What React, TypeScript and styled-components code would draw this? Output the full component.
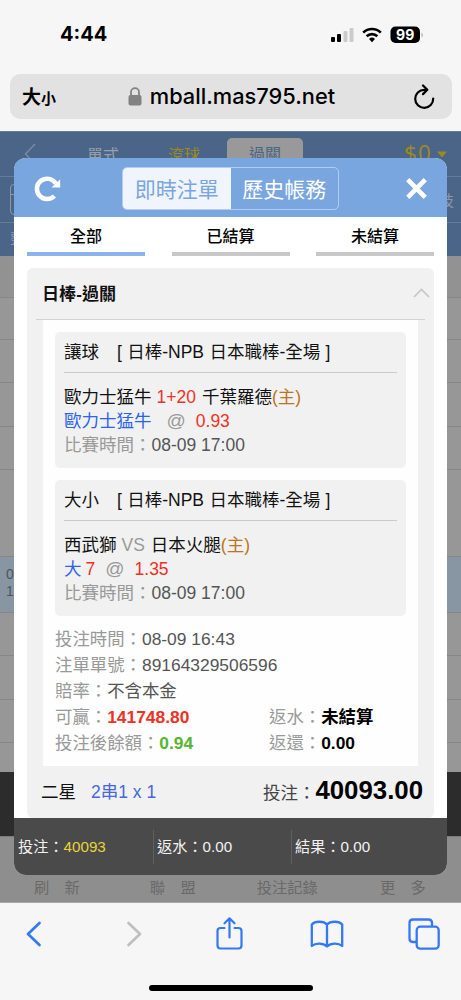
import React from "react";
import styled, { createGlobalStyle } from "styled-components";

const Global = createGlobalStyle`
  * { box-sizing: border-box; }
  body { margin: 0; background: #f6f6f6; }
`;

const Phone = styled.div`
  width: 461px;
  height: 1000px;
  display: flex;
  flex-direction: column;
  position: relative;
  overflow: hidden;
  background: #f6f6f6;
  white-space: nowrap;
  font-family: "Liberation Sans", "Noto Sans CJK TC", sans-serif;
`;

const StatusBar = styled.div`
  height: 74px;
  flex: none;
  display: flex;
  justify-content: space-between;
  padding: 20px 38px 0 60px;
`;
const Clock = styled.div`
  font: 700 20px/29px Inter, sans-serif;
  color: #000;
`;
const StatusIcons = styled.div`
  display: flex;
  height: 29px;
  align-items: center;
`;

const AddressBar = styled.div`
  flex: none;
  height: 45px;
  margin: 0 9px 12px 10px;
  padding: 0 17px 0 12px;
  border-radius: 10px;
  background: #e2e2e2;
  display: flex;
  align-items: center;
  justify-content: space-between;
  color: #000;
`;
const TextSize = styled.div`
  width: 60px;
  font: 700 19px/45px "Noto Sans CJK TC", sans-serif;
  & > small { font-size: 15px; }
`;
const Address = styled.div`
  display: flex;
  align-items: center;
  gap: 8px;
  margin-left: 6px;
  font: 500 21.8px/45px Inter, sans-serif;
`;
const ReloadSlot = styled.div`
  width: 60px;
  display: flex;
  justify-content: flex-end;
`;

const Site = styled.div`
  flex: none;
  height: 771px;
  background: #979797;
  display: flex;
  flex-direction: column;
`;
const SiteNav = styled.div`
  height: 46px;
  flex: none;
  background: #4a6588;
  border-top: 1px solid #6a7c90;
  border-bottom: 1px solid #647b99;
  display: flex;
  align-items: center;
  font-size: 16px;
  color: #8f9aa8;
  padding-left: 24px;
`;
const NavItem = styled.div<{ $left: number; $color?: string }>`
  margin-left: ${(p) => p.$left}px;
  color: ${(p) => p.$color || "#96a0ac"};
`;
const NavPill = styled.div`
  margin-left: 27px;
  width: 76px;
  height: 32px;
  line-height: 33px;
  border-radius: 5px;
  background: #999;
  color: #4a6588;
  text-align: center;
`;
const Balance = styled.div`
  display: flex;
  align-items: center;
  gap: 5px;
  margin-left: 101px;
  margin-top: -3px;
  font: 22.5px/40px "Noto Sans", sans-serif;
  letter-spacing: 1px;
  color: #9a8a20;
  & > svg { margin-top: 3px; }
`;
const SiteFilter = styled.div`
  height: 46px;
  flex: none;
  background: #4a6588;
  border-bottom: 1px solid #647b99;
  display: flex;
  align-items: center;
  justify-content: space-between;
  padding: 0 7px 0 10px;
  font-size: 15px;
  color: #8d98a6;
`;
const FilterBox = styled.div`
  width: 32px;
  height: 31px;
  border: 1px solid #8d98a6;
  border-radius: 4px;
  padding-top: 9px;
  &::before { content: ""; display: block; height: 1px; background: #8d98a6; }
`;
const SiteHeads = styled.div`
  height: 33px;
  flex: none;
  background: #4a6588;
  padding-left: 10px;
  font-size: 15px;
  line-height: 31px;
  color: #8d98a6;
`;
const SiteRow = styled.div<{ $h: number; $bg?: string; $line?: boolean }>`
  flex: none;
  height: ${(p) => p.$h}px;
  background: ${(p) => p.$bg || "#979797"};
  border-bottom: ${(p) => (p.$line === false ? "none" : "1px solid #868686")};
  padding: 9px 0 0 6px;
  font-size: 14px;
  line-height: 17px;
  color: #4f5459;
`;
const SiteTabs = styled.div`
  flex: none;
  height: 67px;
  background: #8e8e8e;
  border-top: 1px solid #7b7b7b;
  display: flex;
  align-items: flex-end;
  font-size: 15.3px;
  line-height: 28px;
  color: #696969;
  border-bottom: 1px solid #a8a8a8;
`;
const SiteTab = styled.div<{ $left: number }>`
  margin-left: ${(p) => p.$left}px;
  word-spacing: 11px;
`;

const Modal = styled.div`
  position: absolute;
  left: 14px;
  top: 158px;
  width: 433px;
  height: 717px;
  border-radius: 12px;
  overflow: hidden;
  background: #fff;
  display: flex;
  flex-direction: column;
`;
const ModalHead = styled.div`
  flex: none;
  height: 59px;
  background: #7aa6df;
  display: flex;
  align-items: center;
  padding: 2px 20px 0 20px;
`;
const Segments = styled.div`
  width: 217px;
  height: 43px;
  margin: 0 auto 0 60px;
  border: 1px solid #b3cdf0;
  border-radius: 5px;
  overflow: hidden;
  display: flex;
`;
const Segment = styled.div<{ $on?: boolean }>`
  flex: 1;
  text-align: center;
  font-size: 21px;
  line-height: 43px;
  background: ${(p) => (p.$on ? "#f0f4fc" : "transparent")};
  color: ${(p) => (p.$on ? "#79a6e0" : "#fff")};
`;
const Tabs = styled.div`
  flex: none;
  height: 39px;
  display: flex;
  justify-content: space-between;
  padding: 0 13px;
`;
const Tab = styled.div<{ $on?: boolean }>`
  width: 118px;
  border-bottom: 4px solid ${(p) => (p.$on ? "#8cb3ea" : "#c8c8c8")};
  text-align: center;
  font-size: 16px;
  font-weight: 500;
  line-height: 39px;
  color: #000;
`;
const Ticket = styled.div`
  flex: none;
  margin: 12px 13px 0;
  height: 550px;
  border-radius: 6px;
  background: #f1f1f1;
  display: flex;
  flex-direction: column;
`;
const TicketHead = styled.div`
  flex: none;
  height: 52px;
  margin: 0 9px;
  padding-bottom: 2px;
  border-bottom: 1px solid #d2d2d2;
  display: flex;
  justify-content: space-between;
  align-items: center;
  font-size: 17.1px;
  font-weight: 700;
  color: #111;
  & > span { margin-left: 6px; }
  & > svg { margin-right: -5px; }
`;
const TicketBody = styled.div`
  flex: none;
  height: 446px;
  margin: 0 16px;
  padding: 12px 12px 0;
  background: #fefefe;
`;
const Leg = styled.div`
  height: 136px;
  margin-bottom: 12px;
  padding: 0 9px;
  border-radius: 5px;
  background: #f1f1f1;
  font-size: 17.5px;
  line-height: 24px;
`;
const LegTitle = styled.div`
  height: 41px;
  line-height: 40px;
  border-bottom: 1px solid #cacaca;
  margin-bottom: 12px;
  color: #111;
  word-spacing: 0.5px;
`;
const Line = styled.div<{ $h: number }>`
  height: ${(p) => p.$h}px;
  line-height: ${(p) => p.$h}px;
  display: flex;
`;
const Ink = styled.span<{ $c: string; $l?: number; $b?: boolean; $s?: number }>`
  color: ${(p) => p.$c};
  margin-left: ${(p) => p.$l || 0}px;
  font-weight: ${(p) => (p.$b ? 700 : 400)};
  ${(p) => (p.$s ? `font-size: ${p.$s}px;` : "")}
`;
const Details = styled.div`
  margin-top: -2px;
  font-size: 17.4px;
`;
const Half = styled.div<{ $w: number }>`
  width: ${(p) => p.$w}px;
  flex: none;
`;
const TicketFoot = styled.div`
  flex: 1;
  display: flex;
  align-items: center;
  justify-content: space-between;
  padding: 0 11px 4px 14px;
  font-size: 17.5px;
`;
const Stake = styled.div`
  display: flex;
  align-items: baseline;
  color: #444;
`;
const Totals = styled.div`
  flex: none;
  height: 57px;
  margin-top: auto;
  background: #4a4a4a;
  display: flex;
  align-items: center;
  font-size: 15.2px;
  color: #f2f2f2;
`;
const Total = styled.div<{ $w: number }>`
  width: ${(p) => p.$w}px;
  height: 34px;
  line-height: 33px;
  padding-left: 4px;
  & + & { border-left: 1px solid #606060; padding-left: 3px; }
`;

const Toolbar = styled.div`
  flex: none;
  height: 63px;
  display: flex;
  align-items: center;
  padding-left: 25px;
`;
const ToolSlot = styled.div<{ $gap?: number; $lift?: number }>`
  display: flex;
  margin-left: ${(p) => p.$gap || 0}px;
  padding-bottom: ${(p) => p.$lift || 0}px;
`;
const HomeBar = styled.div`
  width: 164px;
  height: 6px;
  border-radius: 3px;
  background: #000;
  margin: 20px 0 0 149px;
`;

const GREY = "#999";
const RED = "#ee3124";
const BLUE = "#2d62ee";
const DARK = "#555";
const HOME = "#bd7420";

const rowsTop = [42, 42, 43, 44, 43, 87];
const rowsBottom = [43, 44, 43];

export default function App() {
  return (
    <Phone>
      <Global />
      <StatusBar>
        <Clock>4:44</Clock>
        <StatusIcons>
          <svg width="94" height="20" viewBox="0 0 94 20">
            <rect x="2" y="12" width="4" height="5" rx="1" />
            <rect x="8" y="9" width="4" height="8" rx="1" />
            <rect x="14.5" y="6" width="4" height="11" rx="1" fill="#cbcbcb" />
            <rect x="20.5" y="3" width="4" height="14" rx="1" fill="#cbcbcb" />
            <g fill="none" stroke="#000" strokeWidth="2.6">
              <path d="M34.2 7.6a12.6 12.6 0 0 1 17.6 0" />
              <path d="M37.6 11.3a7.8 7.8 0 0 1 10.8 0" />
            </g>
            <path d="M43 17.2l-3-3.2a4.4 4.4 0 0 1 6 0z" />
            <rect x="61.5" y="1.500" width="29.500" height="16.5" rx="5" />
            <path d="M92.5 7.500v5q1.3-.8 1.3-2.5t-1.3-2.5z" fill="#aaa" />
            <text x="76.2" y="14.8" textAnchor="middle" fontFamily="Inter" fontWeight="700" fontSize="14" fill="#fff">99</text>
          </svg>
        </StatusIcons>
      </StatusBar>
      <AddressBar>
        <TextSize>大<small>小</small></TextSize>
        <Address>
          <svg width="14" height="19" viewBox="0 0 14 19">
            <path d="M3 9V5.2a4 4 0 0 1 8 0V9" fill="none" stroke="#828282" strokeWidth="1.8" />
            <rect x="0.5" y="8" width="13" height="10.5" rx="2" fill="#828282" />
          </svg>
          mball.mas795.net
        </Address>
        <ReloadSlot>
          <svg width="22" height="26" viewBox="0 0 22 26" fill="none" stroke="#000" strokeWidth="2.2" strokeLinecap="round" strokeLinejoin="round">
            <path d="M13.500 5.800H11.200A9 9 0 1 0 20.200 14.500" />
            <path d="M10 1.500l4.300 4.300-4.300 4.300" />
          </svg>
        </ReloadSlot>
      </AddressBar>

      <Site>
        <SiteNav>
          <svg width="12" height="22" viewBox="0 0 12 22" fill="none" stroke="#7d8b9d" strokeWidth="1.4">
            <path d="M11 1L1.5 11 11 21" />
          </svg>
          <NavItem $left={51}>單式</NavItem>
          <NavItem $left={49} $color="#9a8a20">滾球</NavItem>
          <NavPill>過關</NavPill>
          <Balance>
            $0
            <svg width="10" height="7" viewBox="0 0 10 7"><path d="M0 .5h10L5 6.5z" fill="#9a8a20" /></svg>
          </Balance>
        </SiteNav>
        <SiteFilter>
          <FilterBox />
          <span>技</span>
        </SiteFilter>
        <SiteHeads>整</SiteHeads>
        {rowsTop.map((h, i) => (
          <SiteRow key={i} $h={h} $bg={i === 0 ? "#929292" : undefined} />
        ))}
        <SiteRow $h={56} $bg="#8896a4">0<br />1</SiteRow>
        {rowsBottom.map((h, i) => (
          <SiteRow key={i} $h={h} />
        ))}
        <SiteRow $h={29} $line={false} />
        <SiteRow $h={64} $bg="#2c2c2c" $line={false} />
        <SiteTabs>
          <SiteTab $left={34}>刷 新</SiteTab>
          <SiteTab $left={70}>聯 盟</SiteTab>
          <SiteTab $left={61}>投注記錄</SiteTab>
          <SiteTab $left={62}>更 多</SiteTab>
        </SiteTabs>
      </Site>

      <Toolbar>
        <ToolSlot>
          <svg width="17" height="26" viewBox="0 0 17 26" fill="none" stroke="#3478f6" strokeWidth="2.7" strokeLinecap="round" strokeLinejoin="round">
            <path d="M14.5 2L3 13l11.500 11" />
          </svg>
        </ToolSlot>
        <ToolSlot $gap={84}>
          <svg width="17" height="26" viewBox="0 0 17 26" fill="none" stroke="#bfbfbf" strokeWidth="2.7" strokeLinecap="round" strokeLinejoin="round">
            <path d="M2.500 2L14 13 2.500 24" />
          </svg>
        </ToolSlot>
        <ToolSlot $gap={73} $lift={2}>
          <svg width="27" height="34" viewBox="0 0 27 34" fill="none" stroke="#3478f6" strokeWidth="2.2" strokeLinecap="round" strokeLinejoin="round">
            <path d="M8.500 12H4.500Q1.500 12 1.500 15V29.500Q1.500 32.500 4.500 32.500H22.500Q25.500 32.500 25.500 29.500V15Q25.500 12 22.500 12H18.500" />
            <path d="M13.500 21.500V2.500M8.500 7.300L13.500 2.300l5 5" />
          </svg>
        </ToolSlot>
        <ToolSlot $gap={67}>
          <svg width="34" height="28" viewBox="0 0 34 28" fill="none" stroke="#3478f6" strokeWidth="2.3" strokeLinejoin="round">
            <path d="M17 4.500C13.500 .8 5 .8 1.800 4.500V26C5.500 22.800 13 22.800 17 26.500 21 22.800 28.500 22.800 32.200 26V4.500C29 .8 20.500 .8 17 4.500zV26.500" />
          </svg>
        </ToolSlot>
        <ToolSlot $gap={64}>
          <svg width="32" height="32" viewBox="0 0 32 32" fill="none" stroke="#3478f6" strokeWidth="2.3">
            <path d="M8.600 24H5Q1.500 24 1.500 20.500V5Q1.500 1.500 5 1.500H20.500Q24 1.500 24 5V8.500" />
            <rect x="8.700" y="8.700" width="22" height="22" rx="3.500" />
          </svg>
        </ToolSlot>
      </Toolbar>
      <HomeBar />

      <Modal>
        <ModalHead>
          <svg width="28" height="28" viewBox="0 0 28 28">
            <path d="M21.800 8.500A10.200 10.200 0 1 0 20.400 21" fill="none" stroke="#fff" strokeWidth="4.500" />
            <path d="M26.200 4.200V12.400H17.500z" fill="#fff" />
          </svg>
          <Segments>
            <Segment $on>即時注單</Segment>
            <Segment>歷史帳務</Segment>
          </Segments>
          <svg width="21" height="21" viewBox="0 0 21 21" stroke="#fff" strokeWidth="4.600">
            <path d="M1.700 1.700l17.600 17.600M19.300 1.700L1.700 19.300" />
          </svg>
        </ModalHead>
        <Tabs>
          <Tab $on>全部</Tab>
          <Tab>已結算</Tab>
          <Tab>未結算</Tab>
        </Tabs>
        <Ticket>
          <TicketHead>
            <span>日棒-過關</span>
            <svg width="17" height="10" viewBox="0 0 17 10" fill="none" stroke="#c6c6c6" strokeWidth="1.700">
              <path d="M1 9l7.500-7.500L16 9" />
            </svg>
          </TicketHead>
          <TicketBody>
            <Leg>
              <LegTitle>讓球<Ink $c="#111" $l={18}>[ 日棒-NPB 日本職棒-全場 ]</Ink></LegTitle>
              <Line $h={24}>
                <Ink $c="#111">歐力士猛牛</Ink>
                <Ink $c={RED} $l={5}>1+20</Ink>
                <Ink $c="#111" $l={6}>千葉羅德</Ink>
                <Ink $c={HOME}>(主)</Ink>
              </Line>
              <Line $h={24}>
                <Ink $c={BLUE}>歐力士猛牛</Ink>
                <Ink $c={GREY} $l={15} $s={19}>@</Ink>
                <Ink $c={RED} $l={10}>0.93</Ink>
              </Line>
              <Line $h={24}>
                <Ink $c={GREY}>比賽時間：</Ink>
                <Ink $c={DARK}>08-09 17:00</Ink>
              </Line>
            </Leg>
            <Leg>
              <LegTitle>大小<Ink $c="#111" $l={18}>[ 日棒-NPB 日本職棒-全場 ]</Ink></LegTitle>
              <Line $h={24}>
                <Ink $c="#111">西武獅</Ink>
                <Ink $c={GREY} $l={5}>VS</Ink>
                <Ink $c="#111" $l={6}>日本火腿</Ink>
                <Ink $c={HOME}>(主)</Ink>
              </Line>
              <Line $h={24}>
                <Ink $c={BLUE}>大</Ink>
                <Ink $c={RED} $l={4}>7</Ink>
                <Ink $c={GREY} $l={10} $s={19}>@</Ink>
                <Ink $c={RED} $l={10}>1.35</Ink>
              </Line>
              <Line $h={24}>
                <Ink $c={GREY}>比賽時間：</Ink>
                <Ink $c={DARK}>08-09 17:00</Ink>
              </Line>
            </Leg>
            <Details>
              <Line $h={26}>
                <Ink $c={GREY}>投注時間：</Ink>
                <Ink $c={DARK}>08-09 16:43</Ink>
              </Line>
              <Line $h={26}>
                <Ink $c={GREY}>注單單號：</Ink>
                <Ink $c={DARK}>89164329506596</Ink>
              </Line>
              <Line $h={26}>
                <Ink $c={GREY}>賠率：</Ink>
                <Ink $c={DARK}>不含本金</Ink>
              </Line>
              <Line $h={26}>
                <Half $w={214}>
                  <Ink $c={GREY}>可贏：</Ink>
                  <Ink $c={RED} $b>141748.80</Ink>
                </Half>
                <Ink $c={GREY}>返水：</Ink>
                <Ink $c="#000" $b>未結算</Ink>
              </Line>
              <Line $h={26}>
                <Half $w={214}>
                  <Ink $c={GREY}>投注後餘額：</Ink>
                  <Ink $c="#55b530" $b>0.94</Ink>
                </Half>
                <Ink $c={GREY}>返還：</Ink>
                <Ink $c="#000" $b>0.00</Ink>
              </Line>
            </Details>
          </TicketBody>
          <TicketFoot>
            <div>
              <Ink $c="#111">二星</Ink>
              <Ink $c="#4668dc" $l={15}>2串1 x 1</Ink>
            </div>
            <Stake>
              投注：<Ink $c="#000" $b $s={25.8}>40093.00</Ink>
            </Stake>
          </TicketFoot>
        </Ticket>
        <Totals>
          <Total $w={139}>投注：<Ink $c="#e8d535">40093</Ink></Total>
          <Total $w={138}>返水：0.00</Total>
          <Total $w={156}>結果：0.00</Total>
        </Totals>
      </Modal>
    </Phone>
  );
}
